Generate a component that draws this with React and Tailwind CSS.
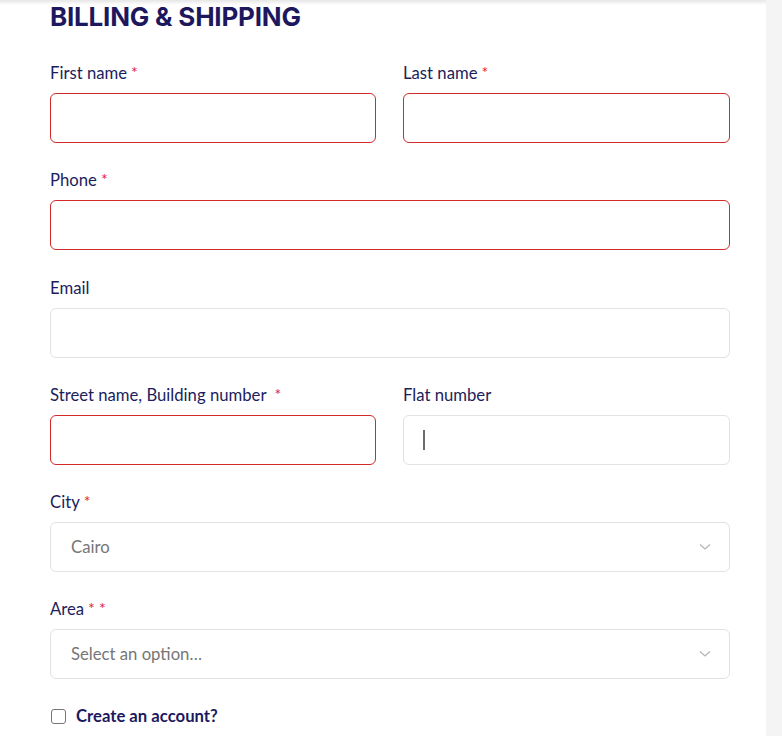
import React from "react";

const lato = { fontFamily: "Lato, 'Open Sans', sans-serif" };

function Label({ text, stars = 1, extraSpace = false }) {
  return (
    <div className="h-[24px] pt-[1px] leading-[24px] text-[16.7px] text-[#211d5c] mb-[9px] flex items-start">
      <span>{text}</span>
      {extraSpace && <span className="w-[4px]" />}
      {Array.from({ length: stars }).map((_, i) => (
        <span key={i} className="text-[#e3203a] text-[16px] leading-[22px] ml-[4px]">*</span>
      ))}
    </div>
  );
}

function Field({ label, stars = 1, error = false, extraSpace = false, cursor = false }) {
  return (
    <div className="flex flex-col">
      <Label text={label} stars={stars} extraSpace={extraSpace} />
      <div
        className={
          "h-[50px] rounded-[6px] border bg-white flex items-center pl-[19px] " +
          (error ? "border-[#d22a2a]" : "border-[#e2e2e2]")
        }
      >
        {cursor && <div className="w-[2px] h-[20px] bg-[#6b6b6b]" />}
      </div>
    </div>
  );
}

function Select({ label, stars = 1, value, placeholder }) {
  return (
    <div className="flex flex-col">
      <Label text={label} stars={stars} />
      <div className="h-[50px] rounded-[6px] border border-[#e2e2e2] bg-white flex items-center justify-between pl-[20px] pr-[18px]">
        <span className="text-[16.7px] text-[#767676]">{value || placeholder}</span>
        <svg width="12" height="8" viewBox="0 0 12 8" fill="none">
          <path d="M1 1.5 L6 6 L11 1.5" stroke="#b5b5b5" strokeWidth="1.3" />
        </svg>
      </div>
    </div>
  );
}

export default function App() {
  return (
    <div className="w-[782px] h-[736px] flex bg-white overflow-hidden relative" style={lato}>
      <div className="absolute top-0 left-0 w-[766px] h-[5px] bg-gradient-to-b from-[#e6e6e6] to-white" />
      <div className="w-[766px] pl-[50px] pr-[36px] flex flex-col">
        <h2
          className="text-[26px] leading-[34px] font-bold text-[#1d185e] tracking-[-0.2px] mb-[26px]"
          style={{ fontFamily: "Inter, 'Open Sans', sans-serif" }}
        >
          BILLING &amp; SHIPPING
        </h2>
        <div className="flex flex-col gap-[24.3px]">
          <div className="grid grid-cols-[326px_327px] gap-[27px]">
            <Field label="First name" error />
            <Field label="Last name" error />
          </div>
          <Field label="Phone" error />
          <Field label="Email" stars={0} />
          <div className="grid grid-cols-[326px_327px] gap-[27px]">
            <Field label="Street name, Building number" error extraSpace />
            <Field label="Flat number" stars={0} cursor />
          </div>
          <Select label="City" value="Cairo" />
          <Select label="Area" stars={2} placeholder="Select an option…" />
          <div className="flex items-center h-[26px]">
            <div className="w-[15px] h-[15px] rounded-[3px] border border-[#767676] bg-white ml-[1px]" />
            <span className="ml-[10px] text-[16.7px] font-bold text-[#1d185e]">Create an account?</span>
          </div>
        </div>
      </div>
      <div className="w-[16px] h-full bg-[#f4f4f4]" />
    </div>
  );
}
